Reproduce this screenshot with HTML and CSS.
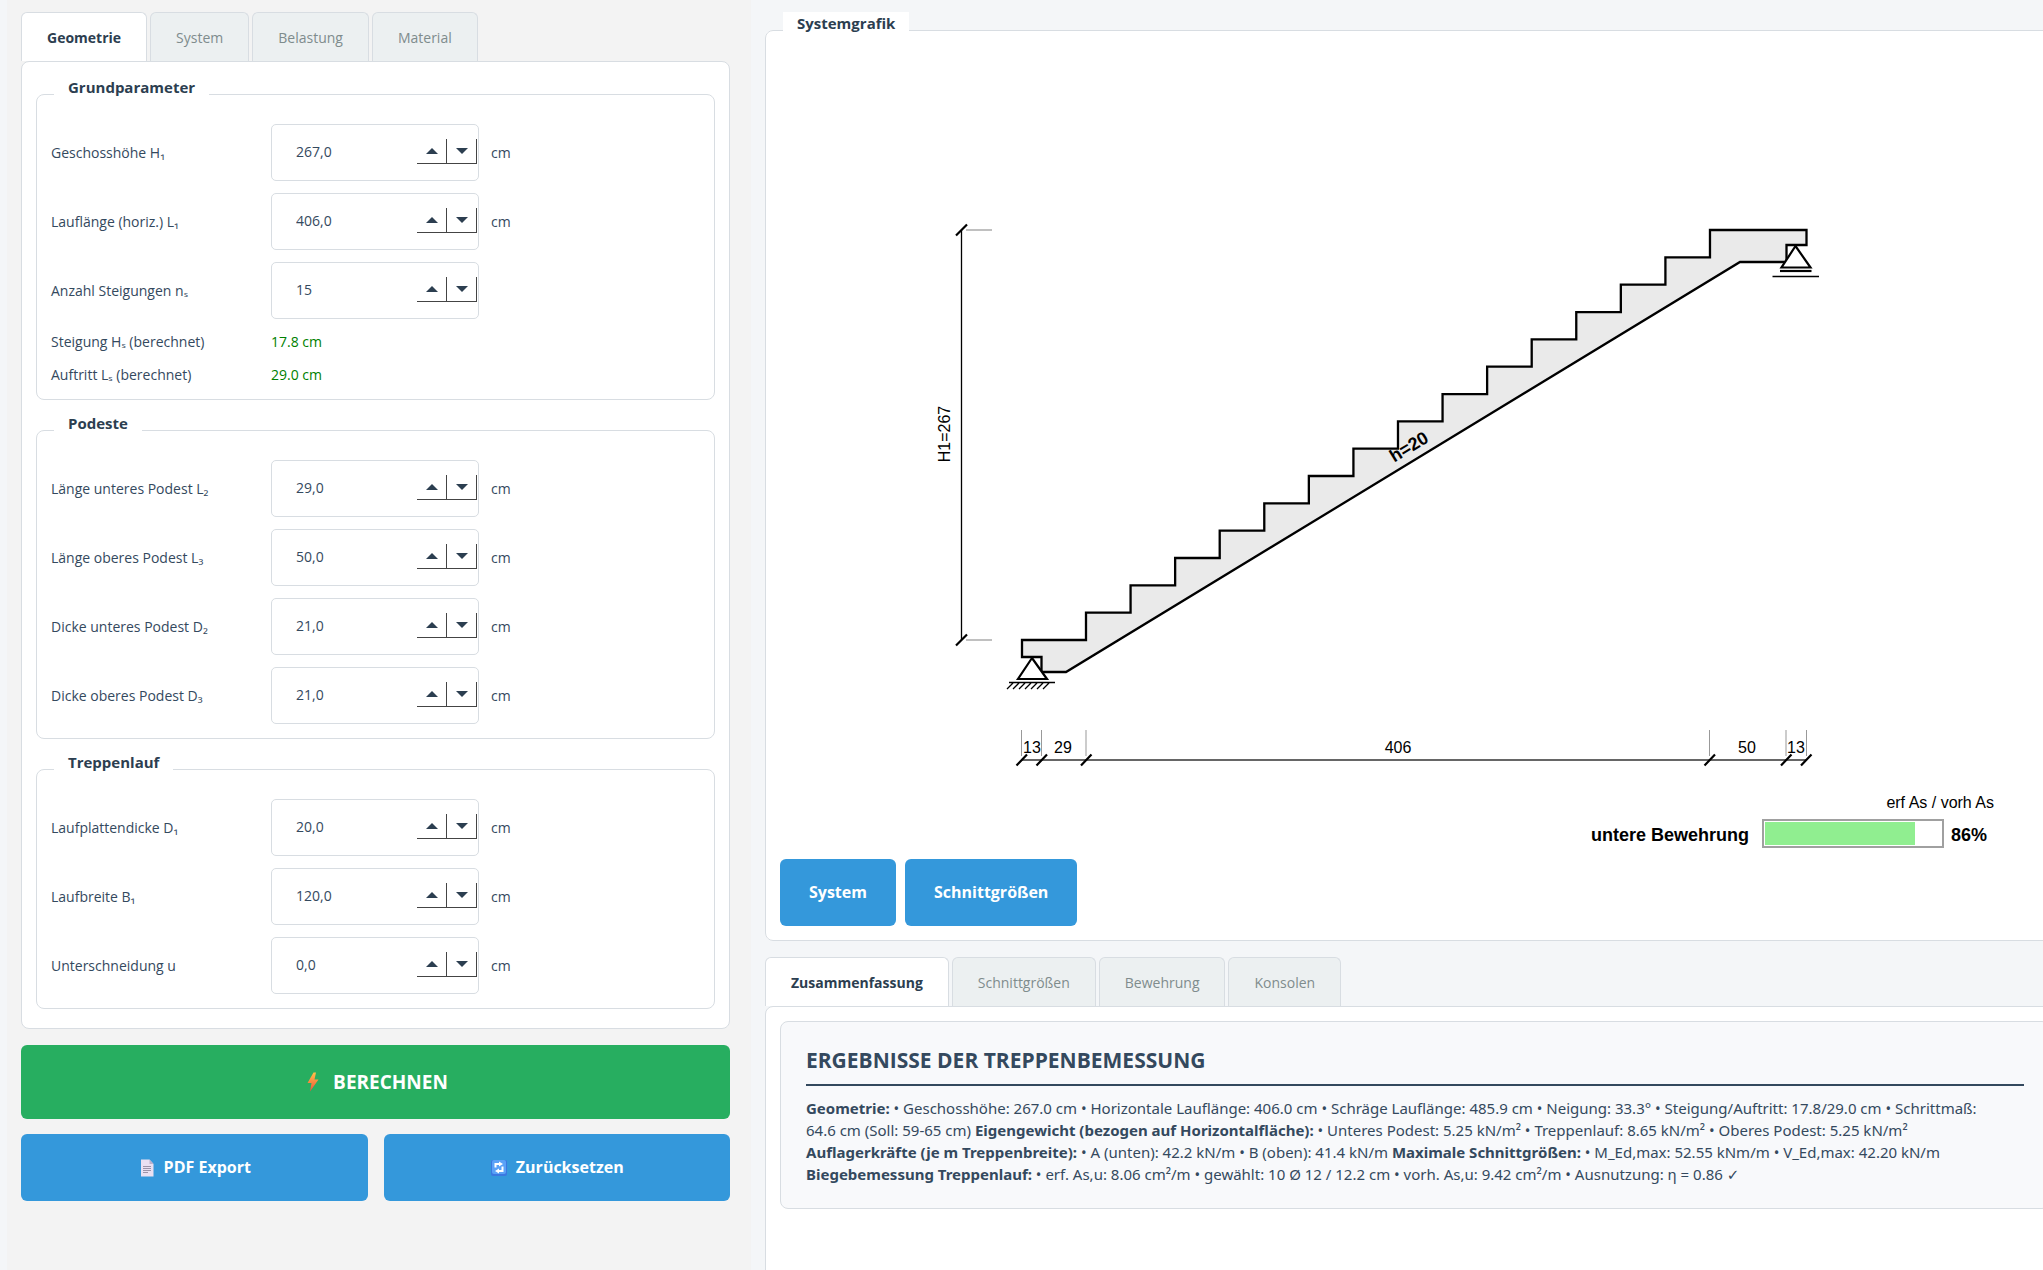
FILE: index.html
```html
<!DOCTYPE html>
<html lang="de">
<head>
	<meta charset="UTF-8" />
	<meta name="viewport" content="width=device-width, initial-scale=1.0" />
	<title>Treppenbemessung</title>
	<link rel="stylesheet" href="styles.css">
</head>
<body>
	<div class="app">
		<form class="side">
			<div class="tab-title">
				<button type="button" class="active">Geometrie</button>
				<button type="button">System</button>
				<button type="button">Belastung</button>
				<button type="button">Material</button>
			</div>
			<div class="tab-con">
				<fieldset>
					<legend>Grundparameter</legend>
					<div class="rows">
						<div class="row">
							<label for="h1">Geschosshöhe H₁</label>
							<div class="spin"><input id="h1" type="text" value="267,0"><button type="button" class="up" aria-label="mehr"></button><button type="button" class="down" aria-label="weniger"></button></div>
							<span>cm</span>
						</div>
						<div class="row">
							<label for="l1">Lauflänge (horiz.) L₁</label>
							<div class="spin"><input id="l1" type="text" value="406,0"><button type="button" class="up" aria-label="mehr"></button><button type="button" class="down" aria-label="weniger"></button></div>
							<span>cm</span>
						</div>
						<div class="row">
							<label for="ns">Anzahl Steigungen nₛ</label>
							<div class="spin"><input id="ns" type="text" value="15"><button type="button" class="up" aria-label="mehr"></button><button type="button" class="down" aria-label="weniger"></button></div>
						</div>
						<div class="row">
							<span>Steigung Hₛ (berechnet)</span>
							<output>17.8 cm</output>
						</div>
						<div class="row">
							<span>Auftritt Lₛ (berechnet)</span>
							<output>29.0 cm</output>
						</div>
					</div>
				</fieldset>
				<fieldset>
					<legend>Podeste</legend>
					<div class="rows">
						<div class="row">
							<label for="l2">Länge unteres Podest L₂</label>
							<div class="spin"><input id="l2" type="text" value="29,0"><button type="button" class="up" aria-label="mehr"></button><button type="button" class="down" aria-label="weniger"></button></div>
							<span>cm</span>
						</div>
						<div class="row">
							<label for="l3">Länge oberes Podest L₃</label>
							<div class="spin"><input id="l3" type="text" value="50,0"><button type="button" class="up" aria-label="mehr"></button><button type="button" class="down" aria-label="weniger"></button></div>
							<span>cm</span>
						</div>
						<div class="row">
							<label for="d2">Dicke unteres Podest D₂</label>
							<div class="spin"><input id="d2" type="text" value="21,0"><button type="button" class="up" aria-label="mehr"></button><button type="button" class="down" aria-label="weniger"></button></div>
							<span>cm</span>
						</div>
						<div class="row">
							<label for="d3">Dicke oberes Podest D₃</label>
							<div class="spin"><input id="d3" type="text" value="21,0"><button type="button" class="up" aria-label="mehr"></button><button type="button" class="down" aria-label="weniger"></button></div>
							<span>cm</span>
						</div>
					</div>
				</fieldset>
				<fieldset>
					<legend>Treppenlauf</legend>
					<div class="rows">
						<div class="row">
							<label for="d1">Laufplattendicke D₁</label>
							<div class="spin"><input id="d1" type="text" value="20,0"><button type="button" class="up" aria-label="mehr"></button><button type="button" class="down" aria-label="weniger"></button></div>
							<span>cm</span>
						</div>
						<div class="row">
							<label for="b1">Laufbreite B₁</label>
							<div class="spin"><input id="b1" type="text" value="120,0"><button type="button" class="up" aria-label="mehr"></button><button type="button" class="down" aria-label="weniger"></button></div>
							<span>cm</span>
						</div>
						<div class="row">
							<label for="u">Unterschneidung u</label>
							<div class="spin"><input id="u" type="text" value="0,0"><button type="button" class="up" aria-label="mehr"></button><button type="button" class="down" aria-label="weniger"></button></div>
							<span>cm</span>
						</div>
					</div>
				</fieldset>
			</div>
			<button type="button" class="btn btn-calc">
				<svg width="20" height="20" viewBox="0 0 20 20">
					<defs><linearGradient id="bolt" x1="0" y1="0" x2="0" y2="1"><stop offset="0" stop-color="#ffc048"/><stop offset="1" stop-color="#f0503c"/></linearGradient></defs>
					<path d="M10.5 0.5 L4.5 11 H8.5 L7 19.5 L15.5 7.5 H11.5 L13 0.5 Z" fill="url(#bolt)"/>
				</svg>
				BERECHNEN
			</button>
			<div class="btn-row">
				<button type="button" class="btn">
					<svg width="18" height="18" viewBox="0 0 18 18">
						<path d="M3 0.5 H11.5 L15.5 5 V17.5 H3 Z" fill="#e9e0f2"/>
						<path d="M11.5 0.5 V5 H15.5 Z" fill="#bdb1cc"/>
						<path d="M5 7.5 H13 M5 9.5 H13 M5 11.5 H13 M5 13.5 H10" stroke="#9b93a8" stroke-width="1"/>
					</svg>
					PDF Export
				</button>
				<button type="button" class="btn">
					<svg width="18" height="18" viewBox="0 0 18 18">
						<rect x="1" y="1" width="16" height="16" rx="2" fill="#3b78e0"/>
						<rect x="2" y="1" width="14" height="14" rx="2" fill="#5aa2f7"/>
						<path d="M5.5 8.5 V5 H9 M12.5 7.5 V12 H9" fill="none" stroke="#fff" stroke-width="2"/>
						<path d="M9 2.5 L13 5 L9 7.5 Z M9 9.5 L5 12 L9 14.5 Z" fill="#fff"/>
					</svg>
					Zurücksetzen
				</button>
			</div>
		</form>

		<main class="main">
			<fieldset class="graphic">
				<legend>Systemgrafik</legend>
				<svg class="plan" viewBox="780 49 1270 802">
					<!-- Treppenkörper -->
					<path class="body" d="M1022 657 V640 H1086 v-27.33 h44.57 v-27.33 h44.57 v-27.33 h44.57 v-27.33 h44.57 v-27.33 h44.57 v-27.33 h44.57 v-27.33 h44.57 v-27.33 h44.57 v-27.33 h44.57 v-27.33 h44.57 v-27.33 h44.57 v-27.33 h44.57 v-27.33 h44.57 v-27.33 h44.57 V230 H1806.5 V245 H1786.5 V262 H1740 L1066 672 H1041.5 V657 Z"/>
					<!-- Auflager unten -->
					<path class="support" d="M1032 658 L1018 679 H1047 Z"/>
					<path class="thin" d="M1009 682.5 H1055 M1013 683 l-6 6 M1019 683 l-6 6 M1025 683 l-6 6 M1031 683 l-6 6 M1037 683 l-6 6 M1043 683 l-6 6 M1049 683 l-6 6"/>
					<!-- Auflager oben -->
					<path class="support" d="M1795.5 246 L1781.5 267.5 H1810.5 Z"/>
					<path class="thick" d="M1780 271 H1811.5"/>
					<path class="thin" d="M1772.5 276.5 H1819"/>
					<text class="strong" transform="translate(1412 452) rotate(-31.3)" text-anchor="middle">h=20</text>
					<!-- Höhenmaß -->
					<path class="ext-h" d="M966 230 H992 M966 640 H992"/>
					<path class="thin" d="M961.5 230 V640"/>
					<path class="thick" d="M956 235.5 L967 224.5 M956 645.5 L967 634.5"/>
					<text transform="translate(950 434) rotate(-90)" text-anchor="middle">H1=267</text>
					<!-- Längenmaße -->
					<path class="ext" d="M1021.5 730 V756 M1041.5 730 V756 M1086 730 V756 M1709.5 730 V756 M1786 730 V756 M1806.5 730 V756"/>
					<path class="dim" d="M1021.5 760 H1806.5"/>
					<path class="thick" d="M1016.5 765.5 l10.5 -11 M1036.5 765.5 l10.5 -11 M1081 765.5 l10.5 -11 M1704.5 765.5 l10.5 -11 M1781 765.5 l10.5 -11 M1801 765.5 l10.5 -11"/>
					<text x="1032" y="753" text-anchor="middle">13</text>
					<text x="1063" y="753" text-anchor="middle">29</text>
					<text x="1398" y="753" text-anchor="middle">406</text>
					<text x="1747" y="753" text-anchor="middle">50</text>
					<text x="1796" y="753" text-anchor="middle">13</text>
					<!-- Ausnutzung -->
					<text x="1994" y="808" text-anchor="end">erf As / vorh As</text>
					<text class="strong" x="1749" y="841" text-anchor="end">untere Bewehrung</text>
					<rect class="bar" x="1763" y="820" width="180" height="27"/>
					<rect class="bar-fill" x="1765" y="822" width="150" height="23"/>
					<text class="strong" x="1951" y="841">86%</text>
				</svg>
				<div class="btn-row">
					<button type="button" class="btn">System</button>
					<button type="button" class="btn">Schnittgrößen</button>
				</div>
			</fieldset>

			<div class="tab-title">
				<button type="button" class="active">Zusammenfassung</button>
				<button type="button">Schnittgrößen</button>
				<button type="button">Bewehrung</button>
				<button type="button">Konsolen</button>
			</div>
			<div class="tab-con result-con">
				<div class="result">
					<h1>ERGEBNISSE DER TREPPENBEMESSUNG</h1>
					<p>
						<b>Geometrie:</b> • Geschosshöhe: 267.0 cm • Horizontale Lauflänge: 406.0 cm • Schräge Lauflänge: 485.9 cm • Neigung: 33.3° • Steigung/Auftritt: 17.8/29.0 cm • Schrittmaß:<br>
						64.6 cm (Soll: 59-65 cm) <b>Eigengewicht (bezogen auf Horizontalfläche):</b> • Unteres Podest: 5.25 kN/m² • Treppenlauf: 8.65 kN/m² • Oberes Podest: 5.25 kN/m²<br>
						<b>Auflagerkräfte (je m Treppenbreite):</b> • A (unten): 42.2 kN/m • B (oben): 41.4 kN/m <b>Maximale Schnittgrößen:</b> • M_Ed,max: 52.55 kNm/m • V_Ed,max: 42.20 kN/m<br>
						<b>Biegebemessung Treppenlauf:</b> • erf. As,u: 8.06 cm²/m • gewählt: 10 Ø 12 / 12.2 cm • vorh. As,u: 9.42 cm²/m • Ausnutzung: η = 0.86 ✓
					</p>
				</div>
			</div>
		</main>
	</div>
</body>
</html>
```
FILE: styles.css
```css
*{padding: 0;margin: 0;box-sizing: border-box;}
body{
	background: #f4f6f8;
	color: #34495e;
	font-family: "Open Sans", "Noto Sans", "DejaVu Sans", sans-serif;
	font-size: 14px;
	line-height: 21px;
}
button, input{font: inherit;color: inherit;}
.app{
	display: flex;
	gap: 14px;
	height: 100vh;
	padding-left: 7px;
	overflow: hidden;
}
.side{
	flex: 0 0 744px;
	display: flex;
	flex-direction: column;
	padding: 12px 21px 0 14px;
	background: #f3f3f3;
}
.main{
	flex: 1;
	display: flex;
	flex-direction: column;
	/* der rechte Bereich läuft über den Fensterrand hinaus */
	margin-right: -22px;
	padding-top: 12px;
}

/* Tabs */
.tab-title{display: flex;gap: 3px;}
.tab-title button{
	height: 49px;
	padding: 0 25px;
	border: 1px solid #d8dde2;
	border-bottom: none;
	border-radius: 6px 6px 0 0;
	background: #ecf0f1;
	color: #7f8c8d;
}
.tab-title button.active{
	background: #fff;
	color: #2c3e50;
	font-weight: bold;
}
.tab-con{
	display: flex;
	flex-direction: column;
	gap: 12px;
	padding: 14px 14px 19px;
	border: 1px solid #d8dde2;
	border-radius: 8px;
	background: #fff;
}

/* Gruppen */
fieldset{
	min-width: 0;
	padding: 0 14px 14px;
	border: 1px solid #d8dde2;
	border-radius: 8px;
	background: #fff;
}
legend{
	margin-left: 3px;
	padding: 0 14px 14px;
	background: #fff;
	color: #2c3e50;
	font-size: 15px;
	line-height: 23px;
	font-weight: bold;
}
.rows{
	display: flex;
	flex-direction: column;
	gap: 12px;
	padding-top: 11px;
}
.row{
	display: grid;
	grid-template-columns: 208px 208px 1fr;
	column-gap: 12px;
	align-items: center;
}
.row output{color: #008000;}
.spin{
	display: flex;
	align-items: flex-start;
	height: 57px;
	padding-right: 1px;
	border: 1px solid #d8dde2;
	border-radius: 5px;
	background: #fff;
}
.spin input{
	flex: 1;
	min-width: 0;
	height: 100%;
	padding: 0 0 2px 24px;
	border: none;
	outline: none;
	background: transparent;
}
.spin button{
	display: flex;
	align-items: center;
	justify-content: center;
	width: 30px;
	height: 25px;
	margin-top: 14px;
	border: solid #444;
	border-width: 0 1px 1px 0;
	background: #fff;
}
.spin button::before{
	content: "";
	border: 6px solid transparent;
}
.spin .up::before{border-top: none;border-bottom-color: #2c3e50;}
.spin .down::before{border-bottom: none;border-top-color: #2c3e50;}

/* Buttons */
.btn{
	display: flex;
	align-items: center;
	justify-content: center;
	gap: 8px;
	height: 67px;
	padding: 0 29px;
	border: none;
	border-radius: 6px;
	background: #3498db;
	color: #fff;
	font-size: 16px;
	font-weight: bold;
}
.btn-calc{
	gap: 10px;
	height: 74px;
	margin: 16px 0 15px;
	background: #27ae60;
	font-size: 19px;
}
.btn-row{display: flex;gap: 16px;}
.side .btn-row .btn{flex: 1;}

/* Systemgrafik */
.graphic{margin-bottom: 16px;}
.graphic .btn-row{gap: 9px;margin-top: 8px;}
.plan{
	display: block;
	width: 100%;
	font: 16px "Liberation Sans", Arial, sans-serif;
}
.plan text{fill: #000;}
.plan path{stroke: #000;fill: none;}
.plan .strong{font-size: 18px;font-weight: bold;}
.plan .body{fill: #eaeaea;stroke-width: 2.3;}
.plan .support{fill: #fff;stroke-width: 2.2;}
.plan .thin{stroke-width: 1.3;}
.plan .thick{stroke-width: 2.2;}
.plan .ext{stroke: #999;}
.plan .ext-h{stroke: #c0c0c0;stroke-width: 2;}
.plan .dim{stroke: #666;stroke-width: 2;}
.plan .bar{fill: #fff;stroke: #a0a0a0;stroke-width: 2;}
.plan .bar-fill{fill: #90ee90;}

/* Ergebnisse */
.result-con{flex: 1;margin-bottom: -12px;}
.result{
	padding: 25px 25px 23px;
	border: 1px solid #d8dde2;
	border-radius: 8px;
	background: #f8f9fb;
}
.result h1{
	padding-bottom: 10px;
	border-bottom: 2px solid #34495e;
	font-size: 21px;
	line-height: 27px;
	margin-bottom: 11px;
}
.result p{
	font-family: "Noto Sans", "DejaVu Sans", sans-serif;
	font-size: 15px;
	line-height: 22px;
}
```
